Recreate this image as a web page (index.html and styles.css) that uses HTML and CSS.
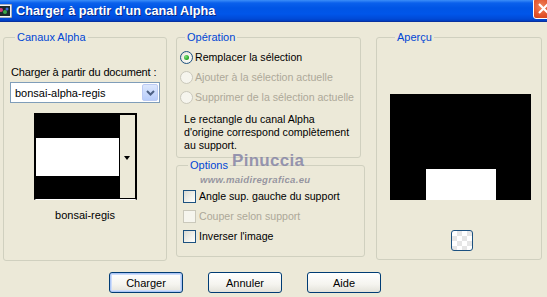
FILE: index.html
```html
<!DOCTYPE html>
<html>
<head>
    <title>Charger à partir d'un canal Alpha</title>
    <link rel="stylesheet" href="styles.css">
</head>
<body>
    <div class="titlebar">
        <svg class="app-icon" width="16" height="14" viewBox="0 0 16 14">
            <rect x="0" y="0" width="16" height="14" fill="#f4f4f4" stroke="#5a6a8a"/>
            <rect x="2" y="2" width="12" height="10" fill="#1b2a2a"/>
            <circle cx="5" cy="6" r="2" fill="#d23a7a"/>
            <circle cx="9" cy="8" r="2" fill="#3aa84a"/>
            <circle cx="11" cy="5" r="1.5" fill="#3a6ad8"/>
        </svg>
        <span class="title">Charger à partir d'un canal Alpha</span>
        <span class="close-btn">
            <svg width="21" height="21" viewBox="0 0 21 21">
                <path d="M6 6 L15 15 M15 6 L6 15" stroke="#fff" stroke-width="2.2"/>
            </svg>
        </span>
    </div>

    <div class="dialog">
        <div class="groups">
            <fieldset class="group group-channels">
                <legend>Canaux Alpha</legend>
                <div class="label">Charger à partir du document :</div>
                <div class="combo">
                    <span class="combo-text">bonsai-alpha-regis</span>
                    <span class="combo-btn">
                        <svg width="9" height="6" viewBox="0 0 9 6"><path d="M1 1 L4.5 4.5 L8 1" fill="none" stroke="#4d6185" stroke-width="2"/></svg>
                    </span>
                </div>
                <div class="thumb">
                    <div class="thumb-img">
                        <div class="band black"></div>
                        <div class="band white"></div>
                        <div class="band black"></div>
                    </div>
                    <div class="thumb-side"><span class="arrow"></span></div>
                </div>
                <div class="caption">bonsai-regis</div>
            </fieldset>

            <div class="middle">
                <fieldset class="group group-op">
                    <legend>Opération</legend>
                    <div class="radio-row"><span class="radio checked"></span>Remplacer la sélection</div>
                    <div class="radio-row disabled"><span class="radio"></span>Ajouter à la sélection actuelle</div>
                    <div class="radio-row disabled"><span class="radio"></span>Supprimer de la sélection actuelle</div>
                    <p class="note">Le rectangle du canal Alpha<br>d'origine correspond complètement<br>au support.</p>
                </fieldset>
                <fieldset class="group group-options">
                    <legend>Options</legend>
                    <div class="check-row"><span class="check"></span>Angle sup. gauche du support</div>
                    <div class="check-row disabled"><span class="check"></span>Couper selon support</div>
                    <div class="check-row"><span class="check"></span>Inverser l'image</div>
                </fieldset>
            </div>

            <fieldset class="group group-preview">
                <legend>Aperçu</legend>
                <div class="preview">
                    <div class="preview-white"></div>
                </div>
                <span class="bg-btn"></span>
            </fieldset>
        </div>

        <div class="buttons">
            <button class="btn default">Charger</button>
            <button class="btn">Annuler</button>
            <button class="btn">Aide</button>
        </div>
    </div>

    <div class="watermark">
        <div class="wm-name">Pinuccia</div>
        <div class="wm-site">www.maidiregrafica.eu</div>
    </div>
</body>
</html>
```

FILE: styles.css
```css
body { margin: 0; background: #ece9d8; font-family: "Liberation Sans", Arial, sans-serif; font-size: 10.6px; color: #000; overflow: hidden; white-space: nowrap; }

/* title bar */
.titlebar { height: 21px; display: flex; align-items: center; overflow: hidden; border-bottom: 1px solid #0831a0;
    background: linear-gradient(to bottom, #3c8ef8 0, #0a60ec 3px, #0055e5 8px, #0056ea 14px, #0049d6 19px, #003dbf 21px); }
.app-icon { margin-left: -4px; flex: none; }
.title { margin-left: 4px; color: #fff; font-weight: bold; font-size: 12.7px; text-shadow: 1px 1px 0 #0a2a86; }
.close-btn { margin-left: auto; margin-right: -7px; margin-top: -5px; width: 21px; height: 21px; flex: none;
    border: 1px solid #fff; border-radius: 3px; box-sizing: border-box;
    background: radial-gradient(circle at 40% 40%, #f0865e 0, #e2532b 55%, #c33a17 100%); }
.close-btn svg { display: block; margin: -1px; }

.dialog { padding: 9px 0 0 3px; }
.groups { display: flex; align-items: flex-start; }

/* group boxes */
.group { margin: 0; border: 1px solid #d0d0bf; border-radius: 3px; box-sizing: border-box; min-width: 0; }
.group legend { color: #0046d5; padding: 0 2px; margin-left: 5px; line-height: 13px; font-size: 11px; }

.group-channels { width: 164px; height: 230px; padding: 0 6px 0 6px; }
.label { margin: 22px 0 0 1px; line-height: 13px; font-size: 11px; letter-spacing: -0.15px; }
.combo { margin-top: 3px; width: 150px; height: 21px; box-sizing: border-box; border: 1px solid #7f9db9; background: #fff;
    display: flex; align-items: center; justify-content: space-between; font-size: 11px; }
.combo-text { padding-left: 4px; }
.combo-btn { width: 16px; height: 17px; margin-right: 1px; border-radius: 2px; border: 1px solid #bccbf4; box-sizing: border-box;
    background: linear-gradient(to bottom, #dce7fd, #b8cdfb); display: flex; align-items: center; justify-content: center; }
.combo-btn svg { display: block; }
.thumb { margin: 10px auto 0; width: 103px; height: 87px; box-sizing: border-box; border: 2px solid #000; border-bottom: 1px solid #fff; display: flex; }
.thumb-img { width: 83px; display: flex; flex-direction: column; }
.band.black { background: #000; height: 23px; }
.band.white { background: #fff; flex: 1; }
.thumb-side { flex: 1; background: #ece9d8; border-left: 1px solid #000; border-bottom: 1px solid #000; display: flex; align-items: center; justify-content: center; }
.arrow { width: 0; height: 0; border-left: 3px solid transparent; border-right: 3px solid transparent; border-top: 4px solid #000; margin-top: 2px; }
.caption { text-align: center; margin-top: 9px; line-height: 13px; font-size: 11px; }

/* middle column */
.middle { margin-left: 9px; width: 189px; display: flex; flex-direction: column; gap: 1px; }
.group-op { width: 185px; height: 127px; padding: 3px 0 0 3px; }
.radio-row { display: flex; align-items: center; height: 20px; gap: 2px; }
.radio { width: 13px; height: 13px; flex: none; box-sizing: border-box; border-radius: 50%; border: 1px solid #1c5180;
    background: radial-gradient(circle at 60% 60%, #fff 0, #f1f0ea 50%, #d8d6cb 100%); display: flex; align-items: center; justify-content: center; }
.radio.checked::after { content: ""; width: 5px; height: 5px; border-radius: 50%; background: radial-gradient(circle at 35% 35%, #7de07d, #21a121 70%); }
.disabled { color: #aca899; }
.disabled .radio, .disabled .check { border-color: #cac8bb; background: #f6f5ee; }
.note { margin: 6px 0 0 4px; line-height: 13px; }

.group-options { width: 189px; height: 98px; padding: 14px 0 0 6px; }
.check-row { display: flex; align-items: center; height: 20px; gap: 3px; }
.check { width: 13px; height: 13px; flex: none; box-sizing: border-box; border: 1px solid #1c5180;
    background: linear-gradient(135deg, #dcdbd2, #f3f2ec 60%, #fff); }

/* preview */
.group-preview { margin-left: 11px; width: 166px; height: 229px; padding: 0 0 0 13px; }
.preview { margin-top: 50px; width: 141px; height: 106px; background: #000; display: flex; justify-content: center; align-items: flex-end; }
.preview-white { width: 70px; height: 31px; background: #fff; }
.bg-btn { display: block; margin: 30px 0 0 61px; width: 22px; height: 21px; box-sizing: border-box; border: 1px solid #1c5180; border-radius: 3px;
    background-color: #fff; background-image: linear-gradient(45deg, #e6e6e6 25%, transparent 25%, transparent 75%, #e6e6e6 75%), linear-gradient(45deg, #e6e6e6 25%, transparent 25%, transparent 75%, #e6e6e6 75%);
    background-size: 10px 10px; background-position: 0 0, 5px 5px; }

/* buttons */
.buttons { display: flex; gap: 25px; padding: 11px 0 0 106px; }
.btn { width: 74px; height: 21px; padding: 0; font: inherit; font-size: 11px; color: #000; border: 1px solid #003c74; border-radius: 3px;
    background: linear-gradient(to bottom, #fff 0, #f5f4ef 60%, #e3e2da 100%); }
.btn.default { box-shadow: inset 0 0 0 1px #adc6f6, inset 0 0 0 2px #cddcfa; }

/* watermark over the options box */
.watermark { position: absolute; left: 200px; top: 151px; pointer-events: none; }
.wm-name { margin-left: 32px; font-size: 17px; font-weight: bold; color: rgba(120, 120, 160, 0.75); letter-spacing: 0.3px; line-height: 19px; }
.wm-site { margin-top: 4px; font-size: 9.6px; font-weight: bold; font-style: italic; color: rgba(120, 120, 140, 0.75); letter-spacing: 0.3px; line-height: 11px; }
```
